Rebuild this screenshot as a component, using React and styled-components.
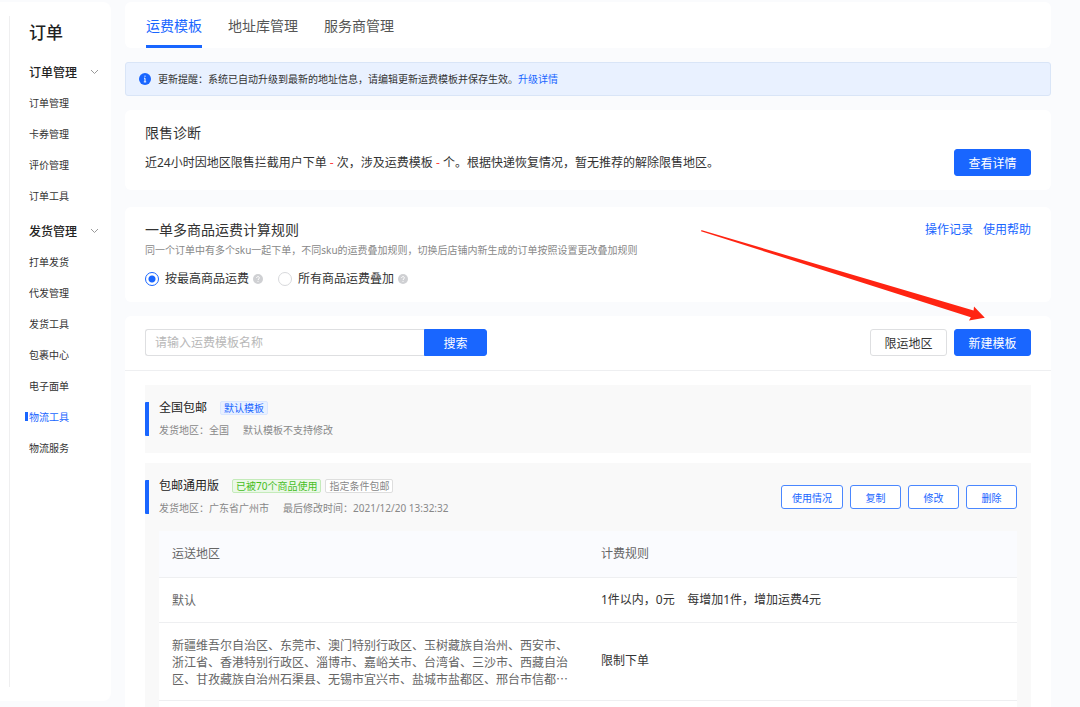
import React, { useState } from 'react';
import styled, { createGlobalStyle } from 'styled-components';

const blue = '#1966ff';
const sans = '"Noto Sans", "Noto Sans CJK SC", sans-serif';
const cjk = '"Noto Sans CJK SC", "Noto Sans", sans-serif';

const GlobalStyle = createGlobalStyle`
  * { box-sizing: border-box; }
  body {
    margin: 0;
    background: #fafbfd;
    color: #333;
    font: 12px/18px ${sans};
  }
  button, input { font-family: inherit; }
  h1, h2, h3, p, ul { margin: 0; padding: 0; font-weight: 400; }
  ul { list-style: none; }
  a { color: inherit; text-decoration: none; }
`;

const Page = styled.div`
  display: flex;
  min-height: 100vh;
  padding-top: 2px;
`;

const Sidebar = styled.aside`
  flex: none;
  width: 111px;
  margin-bottom: 6px;
  padding: 14px 12px 14px 9px;
  background: #fff;
  border-radius: 0 8px 8px 0;
`;

const SidebarInner = styled.nav`
  height: 100%;
  padding-left: 19px;
  border-left: 1px solid #efeff0;
`;

const SidebarTitle = styled.h1`
  padding: 5px 0 12px;
  font-size: 17px;
  line-height: 24px;
  font-weight: 500;
  color: #222;
`;

const MenuGroup = styled.section`
  margin-bottom: 5px;
`;

const GroupToggle = styled.button`
  display: flex;
  align-items: center;
  justify-content: space-between;
  width: 100%;
  height: 30px;
  padding: 0;
  border: 0;
  background: none;
  color: #222;
  font-size: 12px;
  font-weight: 500;
  svg { width: 9px; height: 6px; }
`;

const MenuLink = styled.a`
  display: flex;
  align-items: center;
  height: 31px;
  margin-left: -4px;
  font-size: 10px;
  color: ${(p) => (p.$active ? blue : '#333')};
  &::before {
    content: '';
    width: 3px;
    height: 9px;
    margin-right: 1px;
    background: ${(p) => (p.$active ? blue : 'transparent')};
  }
`;

const Main = styled.main`
  display: flex;
  flex-direction: column;
  flex: 1;
  min-width: 0;
  margin: 0 29px 0 14px;
`;

const Card = styled.section`
  position: relative;
  margin-bottom: ${(p) => p.$gap || 14}px;
  padding: 13px 20px 14px;
  background: #fff;
  border-radius: 6px;
`;

const Tabs = styled.nav`
  display: flex;
  gap: 26px;
  margin-bottom: 14px;
  padding: 0 21px;
  background: #fff;
  border-radius: 6px;
`;

const Tab = styled.a`
  height: 46px;
  border-bottom: 3px solid ${(p) => (p.$active ? blue : 'transparent')};
  color: ${(p) => (p.$active ? blue : '#555')};
  font-size: 14px;
  line-height: 48px;
`;

const Notice = styled.div`
  display: flex;
  align-items: center;
  gap: 7px;
  height: 34px;
  margin-bottom: 14px;
  padding: 0 13px;
  border: 1px solid #d9e5f7;
  border-radius: 3px;
  background: #e9f1ff;
  font-size: 10px;
  svg { width: 12px; height: 12px; }
`;

const Link = styled.a`
  color: ${blue};
`;

const Heading = styled.h2`
  font-size: 14px;
  line-height: 20px;
  color: #333;
`;

const Row = styled.div`
  display: flex;
  align-items: center;
  justify-content: space-between;
  gap: ${(p) => p.$gap || 7}px;
`;

const DiagnosisRow = styled(Row)`
  margin-top: 6px;
`;

const Accent = styled.span`
  color: #ff4040;
`;

const Button = styled.button`
  width: 77px;
  height: 27px;
  padding: 0;
  border: 1px solid ${(p) => (p.$plain ? '#dedfe1' : blue)};
  border-radius: 3px;
  background: ${(p) => (p.$plain ? '#fff' : blue)};
  color: ${(p) => (p.$plain ? '#333' : '#fff')};
  font-size: 12px;
`;

const Hint = styled.p`
  margin-top: 2px;
  color: #888;
  font-size: 10px;
  line-height: 16px;
`;

const Options = styled.div`
  display: flex;
  gap: 15px;
  margin-top: 12px;
`;

const Option = styled.label`
  display: flex;
  align-items: center;
  gap: 6px;
  svg { width: 10px; height: 10px; margin-left: -2px; }
`;

const Radio = styled.input`
  appearance: none;
  width: 14px;
  height: 14px;
  margin: 0;
  border: 1px solid #d8d9dc;
  border-radius: 50%;
  background: #fff;
  &:checked {
    border-color: ${blue};
    background: radial-gradient(circle, ${blue} 3px, #fff 4px);
  }
`;

const Arrow = styled.svg`
  position: absolute;
  top: 23px;
  right: 65px;
  z-index: 1;
  width: 286px;
  height: 92px;
  pointer-events: none;
`;

const ListCard = styled.section`
  display: flex;
  flex-direction: column;
  flex: 1;
  background: #fff;
  border-radius: 6px 6px 0 0;
`;

const Toolbar = styled.div`
  display: flex;
  justify-content: space-between;
  padding: 13px 20px 14px;
  border-bottom: 1px solid #eeeff1;
`;

const SearchForm = styled.form`
  display: flex;
`;

const SearchInput = styled.input`
  width: 279px;
  height: 27px;
  padding: 0 9px;
  border: 1px solid #dedfe1;
  border-right: 0;
  border-radius: 3px 0 0 3px;
  font-size: 12px;
  outline: none;
  &::placeholder { color: #b8b8b8; }
`;

const SearchButton = styled(Button)`
  width: 63px;
  border-radius: 0 3px 3px 0;
`;

const Templates = styled.div`
  display: flex;
  flex-direction: column;
  flex: 1;
  gap: 10px;
  padding: 14px 20px 0;
`;

const Template = styled.article`
  display: flex;
  flex-direction: column;
  flex: ${(p) => (p.$fill ? 1 : 'none')};
  background: #f9f9f9;
`;

const TemplateHead = styled.header`
  display: flex;
  align-items: center;
  justify-content: space-between;
  padding: 17px 14px 17px 0;
`;

const TemplateInfo = styled.div`
  height: 34px;
  padding-left: 10px;
  border-left: 4px solid ${blue};
  border-radius: 1px;
`;

const TitleLine = styled.div`
  display: flex;
  align-items: center;
  gap: 4px;
  height: 12px;
`;

const TemplateTitle = styled.h3`
  margin-right: 9px;
  font-size: 12px;
  color: #222;
`;

const tones = {
  blue: ['#e9f1ff', '#dbe7ff', blue],
  green: ['#ebf8e8', '#c4ebba', '#45bd1d'],
  gray: ['#fff', '#dedede', '#888'],
};

const Tag = styled.span`
  padding: 0 3px;
  border: 1px solid ${(p) => tones[p.$tone][1]};
  border-radius: 2px;
  background: ${(p) => tones[p.$tone][0]};
  color: ${(p) => tones[p.$tone][2]};
  font-size: 10px;
  line-height: 12px;
`;

const Meta = styled.p`
  display: flex;
  gap: 14px;
  margin-top: 8px;
  color: #888;
  font-size: 10px;
  line-height: 16px;
`;

const SmallButton = styled.button`
  min-width: 51px;
  height: 24px;
  padding: 0 10px;
  border: 1px solid #4a87ff;
  border-radius: 3px;
  background: #fff;
  color: ${blue};
  font-size: 10px;
`;

const TableWrap = styled.div`
  flex: 1;
  margin: 0 14px;
  background: #fff;
`;

const Table = styled.table`
  width: 100%;
  border-collapse: collapse;
  table-layout: fixed;
`;

const Th = styled.th`
  height: 46px;
  padding: 0 13px;
  border-bottom: 1px solid #eeeff1;
  background: #fafbfe;
  color: #666;
  font-weight: 400;
  text-align: left;
`;

const Td = styled.td`
  padding: 13px;
  border-bottom: 1px solid #eeeff1;
  color: #333;
  white-space: pre-wrap;
`;

const RegionTd = styled(Td)`
  color: #666;
  font-family: ${cjk};
  line-height: 17px;
`;

const Chevron = () => (
  <svg viewBox="0 0 9 6" fill="none" stroke="#999" aria-hidden="true">
    <path d="M1 1l3.5 3.5L8 1" />
  </svg>
);

const InfoIcon = () => (
  <svg viewBox="0 0 12 12" aria-hidden="true">
    <circle cx="6" cy="6" r="6" fill={blue} />
    <path d="M6 2.6v1.2M5 5.2h1v3.6M4.8 8.9h2.4" stroke="#fff" fill="none" />
  </svg>
);

const HelpIcon = () => (
  <svg viewBox="0 0 10 10" aria-hidden="true">
    <circle cx="5" cy="5" r="5" fill="#cfd0d3" />
    <path d="M3.6 4c0-1.9 2.8-1.9 2.8-.1C6.400 4.900 5 4.900 5 6M5 6.900v1" stroke="#fff" fill="none" />
  </svg>
);

const menu = [
  ['订单管理', ['订单管理', '卡券管理', '评价管理', '订单工具']],
  ['发货管理', ['打单发货', '代发管理', '发货工具', '包裹中心', '电子面单', '物流工具', '物流服务']],
];

const rules = [
  ['默认', '1件以内，0元    每增加1件，增加运费4元'],
  [
    '新疆维吾尔自治区、东莞市、澳门特别行政区、玉树藏族自治州、西安市、浙江省、香港特别行政区、淄博市、嘉峪关市、台湾省、三沙市、西藏自治区、甘孜藏族自治州石渠县、无锡市宜兴市、盐城市盐都区、邢台市信都…',
    '限制下单',
  ],
];

export default function App() {
  const [mode, setMode] = useState('按最高商品运费');
  return (
    <>
      <GlobalStyle />
      <Page lang="zh-CN">
        <Sidebar>
          <SidebarInner>
            <SidebarTitle>订单</SidebarTitle>
            {menu.map(([title, items]) => (
              <MenuGroup key={title}>
                <GroupToggle type="button">
                  {title}
                  <Chevron />
                </GroupToggle>
                <ul>
                  {items.map((item) => (
                    <li key={item}>
                      <MenuLink href="#" $active={item === '物流工具'}>{item}</MenuLink>
                    </li>
                  ))}
                </ul>
              </MenuGroup>
            ))}
          </SidebarInner>
        </Sidebar>

        <Main>
          <Tabs>
            <Tab href="#" $active>运费模板</Tab>
            <Tab href="#">地址库管理</Tab>
            <Tab href="#">服务商管理</Tab>
          </Tabs>

          <Notice>
            <InfoIcon />
            <p>
              更新提醒：系统已自动升级到最新的地址信息，请编辑更新运费模板并保存生效。
              <Link href="#">升级详情</Link>
            </p>
          </Notice>

          <Card $gap={17}>
            <Heading>限售诊断</Heading>
            <DiagnosisRow>
              <p>
                近24小时因地区限售拦截用户下单 <Accent>-</Accent> 次，涉及运费模板 <Accent>-</Accent> 个。根据快递恢复情况，暂无推荐的解除限售地区。
              </p>
              <Button type="button">查看详情</Button>
            </DiagnosisRow>
          </Card>

          <Card>
            <Row>
              <Heading>一单多商品运费计算规则</Heading>
              <Row $gap={10}>
                <Link href="#">操作记录</Link>
                <Link href="#">使用帮助</Link>
              </Row>
            </Row>
            <Hint>同一个订单中有多个sku一起下单，不同sku的运费叠加规则，切换后店铺内新生成的订单按照设置更改叠加规则</Hint>
            <Options>
              {['按最高商品运费', '所有商品运费叠加'].map((name) => (
                <Option key={name}>
                  <Radio type="radio" name="mode" checked={mode === name} onChange={() => setMode(name)} />
                  {name}
                  <HelpIcon />
                </Option>
              ))}
            </Options>
            <Arrow viewBox="0 0 286 92" aria-hidden="true">
              <path d="M1 0.500L2 0.300L273.600 80.500L274 76.500L284.800 87.700L269 90.500L270.800 87.300L1 1.200Z" fill="#ff2412" />
            </Arrow>
          </Card>

          <ListCard>
            <Toolbar>
              <SearchForm onSubmit={(e) => e.preventDefault()}>
                <SearchInput aria-label="运费模板名称" placeholder="请输入运费模板名称" />
                <SearchButton type="submit">搜索</SearchButton>
              </SearchForm>
              <Row>
                <Button type="button" $plain>限运地区</Button>
                <Button type="button">新建模板</Button>
              </Row>
            </Toolbar>

            <Templates>
              <Template>
                <TemplateHead>
                  <TemplateInfo>
                    <TitleLine>
                      <TemplateTitle>全国包邮</TemplateTitle>
                      <Tag $tone="blue">默认模板</Tag>
                    </TitleLine>
                    <Meta>
                      <span>发货地区：全国</span>
                      <span>默认模板不支持修改</span>
                    </Meta>
                  </TemplateInfo>
                </TemplateHead>
              </Template>

              <Template $fill>
                <TemplateHead>
                  <TemplateInfo>
                    <TitleLine>
                      <TemplateTitle>包邮通用版</TemplateTitle>
                      <Tag $tone="green">已被70个商品使用</Tag>
                      <Tag $tone="gray">指定条件包邮</Tag>
                    </TitleLine>
                    <Meta>
                      <span>发货地区：广东省广州市</span>
                      <span>最后修改时间：2021/12/20 13:32:32</span>
                    </Meta>
                  </TemplateInfo>
                  <Row>
                    {['使用情况', '复制', '修改', '删除'].map((name) => (
                      <SmallButton key={name} type="button">{name}</SmallButton>
                    ))}
                  </Row>
                </TemplateHead>
                <TableWrap>
                  <Table>
                    <thead>
                      <tr>
                        <Th scope="col">运送地区</Th>
                        <Th scope="col">计费规则</Th>
                      </tr>
                    </thead>
                    <tbody>
                      {rules.map(([region, rule]) => (
                        <tr key={region}>
                          <RegionTd>{region}</RegionTd>
                          <Td>{rule}</Td>
                        </tr>
                      ))}
                    </tbody>
                  </Table>
                </TableWrap>
              </Template>
            </Templates>
          </ListCard>
        </Main>
      </Page>
    </>
  );
}
